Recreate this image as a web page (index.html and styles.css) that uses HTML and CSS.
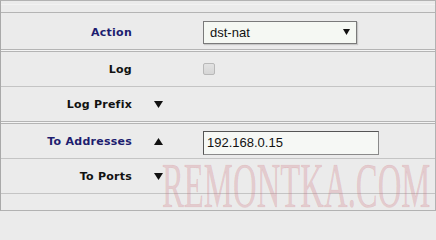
FILE: index.html
```html
<!DOCTYPE html>
<html>
<head>
<meta charset="utf-8">
<link rel="stylesheet" href="styles.css">
</head>
<body>
<div class="panel">
  <div class="row-top"></div>
  <div class="row row-action">
    <div class="label label-blue">Action</div>
    <div class="toggle"></div>
    <div class="value">
      <div class="select">
        <span>dst-nat</span>
        <svg class="sel-arrow" width="7" height="6" viewBox="0 0 7 6"><path d="M0 0H7L3.5 6Z" fill="#111"/></svg>
      </div>
    </div>
  </div>
  <div class="sep-double"></div>
  <div class="row line">
    <div class="label">Log</div>
    <div class="toggle"></div>
    <div class="value"><div class="checkbox"></div></div>
  </div>
  <div class="row">
    <div class="label">Log Prefix</div>
    <div class="toggle"><svg width="9" height="7" viewBox="0 0 9 7"><path d="M0 0H9L4.5 7Z" fill="#111"/></svg></div>
    <div class="value"></div>
  </div>
  <div class="sep-double"></div>
  <div class="row line">
    <div class="label label-blue">To Addresses</div>
    <div class="toggle"><svg width="9" height="7" viewBox="0 0 9 7"><path d="M0 7H9L4.5 0Z" fill="#111"/></svg></div>
    <div class="value"><div class="input">192.168.0.15</div></div>
  </div>
  <div class="row line">
    <div class="label">To Ports</div>
    <div class="toggle"><svg width="9" height="7" viewBox="0 0 9 7"><path d="M0 0H9L4.5 7Z" fill="#111"/></svg></div>
    <div class="value"></div>
  </div>
  <div class="row-bottom"></div>
  <div class="watermark">REMONTKA.COM</div>
</div>
</body>
</html>
```
FILE: styles.css
```css
html, body {
  margin: 0;
  padding: 0;
  background: #ebebeb;
}
.panel {
  position: relative;
  width: 436px;
  height: 211px;
  box-sizing: border-box;
  border: 1px solid #b2b2b2;
  border-left-color: #a9a9a9;
  background: #ebebeb;
  display: flex;
  flex-direction: column;
}
.row-top {
  height: 12px;
  box-sizing: border-box;
  border-top: 3px solid #ebebeb;
  border-bottom: 1px solid #b4b4b4;
  background: linear-gradient(#f2f2f2 0 1px, #ebebeb 1px);
  flex: none;
}
.row {
  display: grid;
  grid-template-columns: 131px 71px 1fr;
  align-items: center;
  height: 34px;
  flex: none;
}
.row-action {
  height: 36px;
  padding-top: 3px;
  box-sizing: border-box;
}
.line {
  height: 35px;
  border-bottom: 1px solid #c4c4c4;
  box-sizing: border-box;
}
.sep-double {
  height: 1px;
  background: #f4f4f4;
  border-top: 1px solid #b4b4b4;
  border-bottom: 1px solid #b4b4b4;
  flex: none;
}
.row-bottom {
  flex: 1;
}
.label {
  font-family: "DejaVu Sans", Verdana, sans-serif;
  font-weight: bold;
  font-size: 11px;
  letter-spacing: 0.25px;
  color: #111;
  text-align: right;
  white-space: nowrap;
}
.label-blue {
  color: #1d1d6f;
}
.toggle {
  padding-left: 22px;
  display: flex;
  align-items: center;
}
.value {
  display: flex;
  align-items: center;
}
.select {
  width: 154px;
  height: 23px;
  box-sizing: border-box;
  border: 1px solid #7a7a7a;
  background: #f5f8f3;
  box-shadow: 1px 1px 1px rgba(0,0,0,0.15);
  display: flex;
  align-items: center;
  justify-content: space-between;
  padding: 0 6px 1px 6px;
  font-family: "Liberation Sans", Arial, sans-serif;
  font-size: 13px;
  color: #111;
}
.sel-arrow {
  margin-bottom: 1px;
}
.checkbox {
  width: 12px;
  height: 12px;
  box-sizing: border-box;
  border: 1px solid #b8b8b8;
  border-radius: 2px;
  background: linear-gradient(#e2e2e2, #d6d6d6);
  margin-top: -1px;
}
.input {
  width: 176px;
  height: 24px;
  box-sizing: border-box;
  border: 1px solid #8a8a8a;
  border-top-color: #555;
  border-left-color: #555;
  background: #f6f8f5;
  font-family: "Liberation Sans", Arial, sans-serif;
  font-size: 13px;
  color: #111;
  padding: 3px 3px 0;
  margin-top: 3px;
}
.watermark {
  position: absolute;
  left: 161px;
  top: 154px;
  width: 560px;
  font-family: "Liberation Serif", "Times New Roman", serif;
  font-size: 63px;
  line-height: 1;
  color: rgba(205, 110, 120, 0.26);
  -webkit-text-stroke: 0.6px rgba(205, 110, 120, 0.2);
  transform: scaleX(0.52);
  transform-origin: left top;
  white-space: nowrap;
  pointer-events: none;
}
```
